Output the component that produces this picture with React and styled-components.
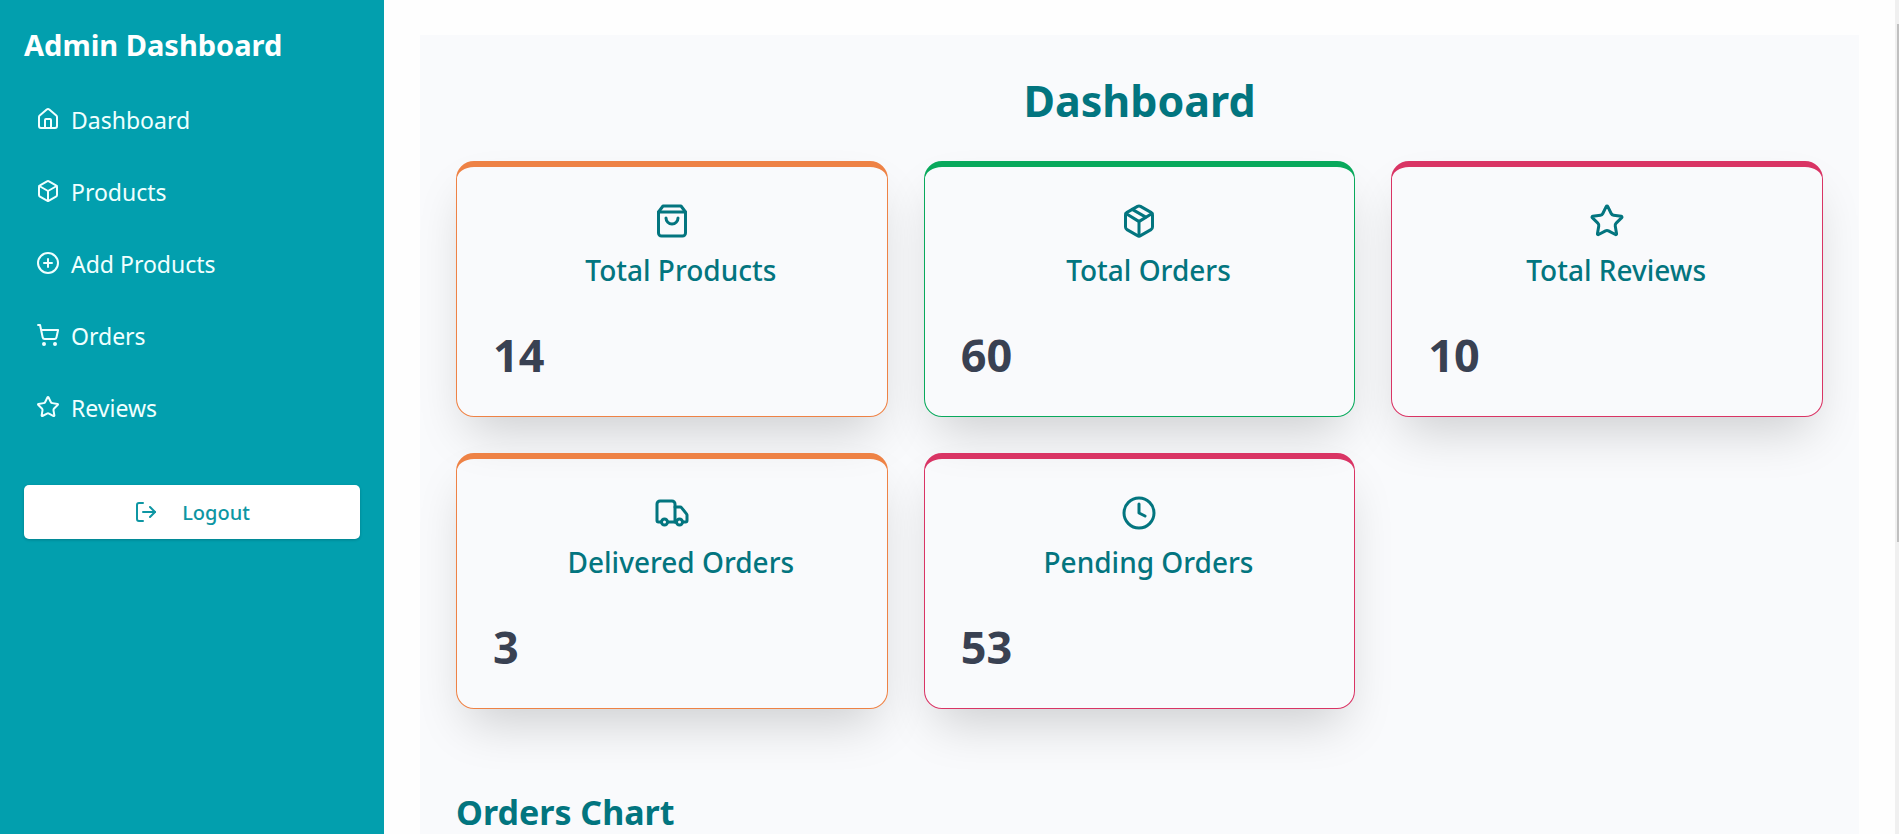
import React from "react";
import styled, { createGlobalStyle } from "styled-components";
import {
  LuHouse,
  LuBox,
  LuCirclePlus,
  LuShoppingCart,
  LuStar,
  LuLogOut,
  LuShoppingBag,
  LuPackage,
  LuTruck,
  LuClock,
} from "react-icons/lu";

const GlobalStyle = createGlobalStyle`
  *, *::before, *::after { box-sizing: border-box; }
  body {
    margin: 0;
    background: #fefefe;
    font-family: "Noto Sans", "Open Sans", sans-serif;
  }
`;

const Page = styled.div`
  display: flex;
  height: 100vh;
  overflow: hidden;
`;

const Sidebar = styled.aside`
  flex: none;
  width: 384px;
  padding: 24px;
  background: #029fae;
  color: #ffffff;
`;

const Brand = styled.h2`
  margin: 0 0 18px;
  font-size: 29px;
  font-weight: 700;
  line-height: 42px;
`;

const NavList = styled.ul`
  margin: 0 0 41px;
  padding: 0;
  list-style: none;
`;

const NavLink = styled.a`
  display: flex;
  align-items: center;
  gap: 11px;
  height: 72px;
  padding: 0 12px;
  color: #f0ffff;
  font-size: 23px;
  text-decoration: none;

  svg {
    width: 24px;
    height: 24px;
    margin-bottom: 2px;
  }
`;

const LogoutButton = styled.button`
  display: flex;
  align-items: center;
  justify-content: center;
  gap: 24px;
  width: 100%;
  height: 54px;
  padding: 0;
  border: 0;
  border-radius: 5px;
  background: #ffffff;
  box-shadow: 0 1px 3px rgba(0, 0, 0, 0.2);
  color: #0e96a3;
  font: 500 20px "Noto Sans", "Open Sans", sans-serif;

  svg {
    width: 24px;
    height: 24px;
  }
`;

const Main = styled.main`
  flex: 1;
  min-width: 0;
  padding: 35px 36px;
`;

const Panel = styled.div`
  padding: 36px 36px 400px;
  background: #f9fafc;
`;

const PageTitle = styled.h1`
  margin: 0 0 30px;
  color: #02757f;
  font-size: 43px;
  font-weight: 700;
  line-height: 60px;
  text-align: center;
`;

const CardGrid = styled.div`
  display: grid;
  grid-template-columns: repeat(3, 1fr);
  gap: 36px;
`;

const Card = styled.section`
  padding: 36px;
  border: 1px solid ${(p) => p.$accent};
  border-top-width: 6px;
  border-radius: 18px;
  box-shadow: 0 25px 50px -12px rgba(0, 0, 0, 0.18);

  svg {
    display: block;
    width: 36px;
    height: 36px;
    margin: 0 auto 12px;
    color: #03757f;
  }
`;

const CardTitle = styled.h2`
  margin: 0 0 41px 18px;
  color: #03757f;
  font-size: 28px;
  font-weight: 500;
  line-height: 38px;
  text-align: center;
`;

const CardValue = styled.p`
  margin: 0;
  color: #394152;
  font-size: 45px;
  font-weight: 700;
  line-height: 50px;
`;

const SectionTitle = styled.h2`
  margin: 82px 0 0;
  color: #02757f;
  font-size: 34px;
  font-weight: 700;
  line-height: 42px;
`;

const ScrollTrack = styled.div`
  flex: none;
  width: 4px;
  padding: 24px 0 0 2px;
  background: #f0f0f0;
`;

const ScrollThumb = styled.div`
  height: 64%;
  background: #c0c0c0;
`;

const navItems = [
  { label: "Dashboard", Icon: LuHouse },
  { label: "Products", Icon: LuBox },
  { label: "Add Products", Icon: LuCirclePlus },
  { label: "Orders", Icon: LuShoppingCart },
  { label: "Reviews", Icon: LuStar },
];

const ORANGE = "#ee8245";
const GREEN = "#09a95c";
const PINK = "#d93464";

const stats = [
  { label: "Total Products", value: 14, Icon: LuShoppingBag, accent: ORANGE },
  { label: "Total Orders", value: 60, Icon: LuPackage, accent: GREEN },
  { label: "Total Reviews", value: 10, Icon: LuStar, accent: PINK },
  { label: "Delivered Orders", value: 3, Icon: LuTruck, accent: ORANGE },
  { label: "Pending Orders", value: 53, Icon: LuClock, accent: PINK },
];

export default function App() {
  return (
    <Page>
      <GlobalStyle />
      <Sidebar>
        <Brand>Admin Dashboard</Brand>
        <nav>
          <NavList>
            {navItems.map(({ label, Icon }) => (
              <li key={label}>
                <NavLink href="#">
                  <Icon aria-hidden="true" />
                  {label}
                </NavLink>
              </li>
            ))}
          </NavList>
        </nav>
        <LogoutButton type="button">
          <LuLogOut aria-hidden="true" />
          Logout
        </LogoutButton>
      </Sidebar>
      <Main>
        <Panel>
          <PageTitle>Dashboard</PageTitle>
          <CardGrid>
            {stats.map(({ label, value, Icon, accent }) => (
              <Card key={label} $accent={accent}>
                <Icon aria-hidden="true" />
                <CardTitle>{label}</CardTitle>
                <CardValue>{value}</CardValue>
              </Card>
            ))}
          </CardGrid>
          <SectionTitle>Orders Chart</SectionTitle>
        </Panel>
      </Main>
      <ScrollTrack aria-hidden="true">
        <ScrollThumb />
      </ScrollTrack>
    </Page>
  );
}
